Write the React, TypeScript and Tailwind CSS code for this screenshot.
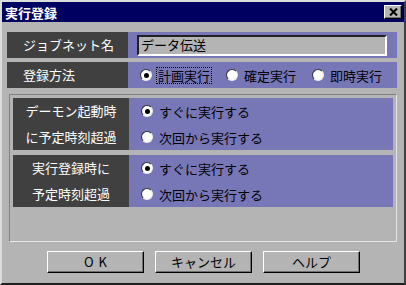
import React from 'react';

const font = { fontFamily: '"Noto Sans CJK JP", "Noto Sans", sans-serif' };

function Radio({ checked }: { checked?: boolean }) {
  return (
    <span className="relative flex h-[12px] w-[12px] shrink-0 items-center justify-center rounded-full border border-t-[#303030] border-l-[#303030] border-r-[#e8e8e8] border-b-[#e8e8e8] bg-white">
      {checked && <span className="h-[5px] w-[5px] rounded-full bg-black" />}
    </span>
  );
}

function Option({ label, checked, focused, width }: { label: string; checked?: boolean; focused?: boolean; width?: string }) {
  return (
    <div className={`flex items-center gap-[4px] ${width ?? ''}`}>
      <Radio checked={checked} />
      <span className={`text-[13px] leading-[15px] text-black ${focused ? 'border border-dotted border-black px-px' : 'px-[2px]'}`}>
        {label}
      </span>
    </div>
  );
}

function Button({ label, wide }: { label: string; wide?: boolean }) {
  return (
    <button className="flex h-[22px] w-[97px] items-center justify-center border border-t-white border-l-white border-r-black border-b-black bg-[#b4b4b4] text-[13px] text-black shadow-[inset_-1px_-1px_0_#707070]">
      <span className={wide ? 'tracking-[5px] pl-[5px]' : ''}>{label}</span>
    </button>
  );
}

function Block({ lines }: { lines: string[] }) {
  return (
    <div className="flex h-[52px]">
      <div className="flex w-[116px] flex-col items-center justify-center bg-[#404040] text-[13px] leading-[26px] text-white">
        {lines.map((l) => (
          <span key={l}>{l}</span>
        ))}
      </div>
      <div className="flex flex-1 flex-col bg-[#7777b8] pl-[12px]">
        <div className="flex h-[26px] items-center">
          <Option label="すぐに実行する" checked />
        </div>
        <div className="flex h-[26px] items-center">
          <Option label="次回から実行する" />
        </div>
      </div>
    </div>
  );
}

export default function App() {
  return (
    <div
      className="flex h-[285px] w-[406px] flex-col border-2 border-t-[#dcdcdc] border-l-[#dcdcdc] border-r-[#404040] border-b-[#202020] bg-[#b4b4b4]"
      style={font}
    >
      <div className="flex h-[20px] items-center justify-between bg-[#000060] pl-[3px] pr-[2px]">
        <span className="text-[13px] font-bold leading-none text-white">実行登録</span>
        <button className="flex h-[14px] w-[18px] items-center justify-center border border-t-white border-l-white border-r-black border-b-black bg-[#b4b4b4] shadow-[inset_-1px_-1px_0_#707070]">
          <svg width="9" height="8" viewBox="0 0 9 8">
            <path d="M1 0.5 L8 7.5 M8 0.5 L1 7.5" stroke="black" strokeWidth="2" />
          </svg>
        </button>
      </div>

      <div className="ml-[5px] mt-[10px] flex w-[390px] flex-col gap-[4px]">
        <div className="flex h-[26px]">
          <div className="flex w-[121px] items-center bg-[#404040] pl-[16px] text-[13px] text-white">ジョブネット名</div>
          <div className="flex flex-1 items-center bg-[#7777b8] pl-[9px]">
            <div className="flex h-[21px] w-[250px] items-center border-2 border-t-[#202020] border-l-[#202020] border-r-white border-b-white bg-[#b4b4b4] pl-[2px] text-[13px] text-black">
              データ伝送
            </div>
          </div>
        </div>
        <div className="flex h-[26px]">
          <div className="flex w-[121px] items-center bg-[#404040] pl-[16px] text-[13px] text-white">登録方法</div>
          <div className="flex flex-1 items-center bg-[#7777b8] pl-[12px]">
            <Option label="計画実行" checked focused width="w-[86px]" />
            <Option label="確定実行" width="w-[86px]" />
            <Option label="即時実行" />
          </div>
        </div>
      </div>

      <div className="ml-[7px] mt-[6px] flex h-[148px] w-[388px] flex-col gap-[5px] border border-t-[#808080] border-l-[#808080] border-r-[#e4e4e4] border-b-[#e4e4e4] p-[3px] pt-[3px]">
        <Block lines={['デーモン起動時', 'に予定時刻超過']} />
        <Block lines={['実行登録時に', '予定時刻超過']} />
      </div>

      <div className="mt-[9px] flex justify-center gap-[11px] pl-[1px]">
        <Button label="OK" wide />
        <Button label="キャンセル" />
        <Button label="ヘルプ" />
      </div>
    </div>
  );
}
